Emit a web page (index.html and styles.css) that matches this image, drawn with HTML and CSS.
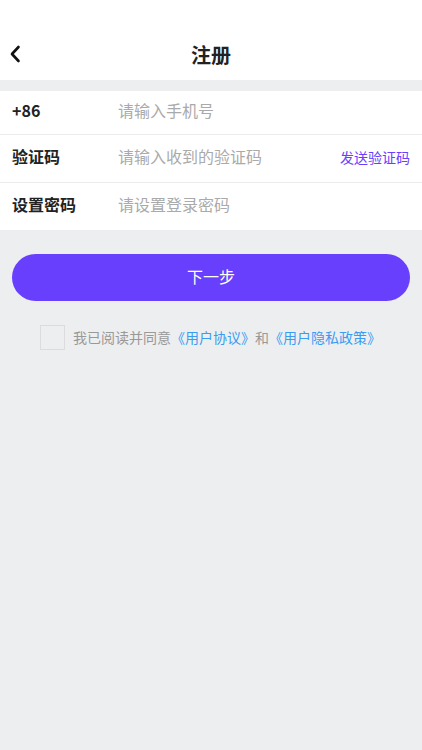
FILE: index.html
```html
<!DOCTYPE html>
<html lang="zh-CN">
<head>
<meta charset="utf-8">
<title>注册</title>
<link rel="stylesheet" href="styles.css">
</head>
<body>
<header class="topbar">
  <div class="back">
    <svg width="12" height="18" viewBox="0 0 12 18"><path d="M9.5 2 L3 9 L9.5 16" fill="none" stroke="#111" stroke-width="2.6" stroke-linecap="round" stroke-linejoin="round"/></svg>
  </div>
  <h1 class="title">注册</h1>
</header>
<div class="gap"></div>
<section class="form">
  <div class="row row-first">
    <span class="label">+86</span>
    <span class="ph">请输入手机号</span>
  </div>
  <div class="row">
    <span class="label">验证码</span>
    <span class="ph">请输入收到的验证码</span>
    <span class="send">发送验证码</span>
  </div>
  <div class="row">
    <span class="label">设置密码</span>
    <span class="ph">请设置登录密码</span>
  </div>
</section>
<div class="actions">
  <button class="next">下一步</button>
  <div class="agree">
    <span class="box"></span>
    <span class="agree-text">我已阅读并同意<a class="link">《用户协议》</a>和<a class="link">《用户隐私政策》</a></span>
  </div>
</div>
</body>
</html>
```
FILE: styles.css
```css
html, body {
  margin: 0;
  padding: 0;
  background: #edeef0;
  font-family: "Noto Sans CJK SC", "Noto Sans", sans-serif;
}
.topbar {
  background: #fff;
  height: 80px;
  display: flex;
  align-items: flex-end;
  justify-content: center;
  position: relative;
}
.back {
  position: absolute;
  left: 9px;
  top: 44px;
  width: 12px;
  height: 18px;
}
.title {
  margin: 0 0 11px;
  font-size: 20px;
  font-weight: 700;
  color: #222;
  line-height: 28px;
}
.gap {
  height: 11px;
}
.form {
  background: #fff;
}
.row {
  display: flex;
  align-items: center;
  height: 47px;
  box-sizing: border-box;
  padding: 0 12px 6px;
  border-top: 1px solid #ececec;
  height: 48px;
}
.row-first {
  border-top: none;
  height: 43px;
}
.label {
  width: 106px;
  font-size: 16px;
  font-weight: 700;
  color: #222;
}
.ph {
  flex: 1;
  font-size: 16px;
  color: #aaa;
}
.send {
  font-size: 14px;
  color: #6a40fe;
  margin-top: 2px;
}
.actions {
  padding: 24px 12px 0;
}
.next {
  display: block;
  width: 100%;
  height: 47px;
  border: none;
  border-radius: 24px;
  background: #693ffe;
  color: #fff;
  font-family: inherit;
  font-size: 16px;
  padding: 0 0 4px;
}
.agree {
  display: flex;
  align-items: center;
  margin: 24px 0 0 28px;
}
.box {
  width: 23px;
  height: 23px;
  border: 1px solid #dcdcdc;
  margin-right: 8px;
}
.agree-text {
  font-size: 14px;
  color: #999;
  margin-top: -2px;
}
.link {
  color: #3a9cf0;
}
```
